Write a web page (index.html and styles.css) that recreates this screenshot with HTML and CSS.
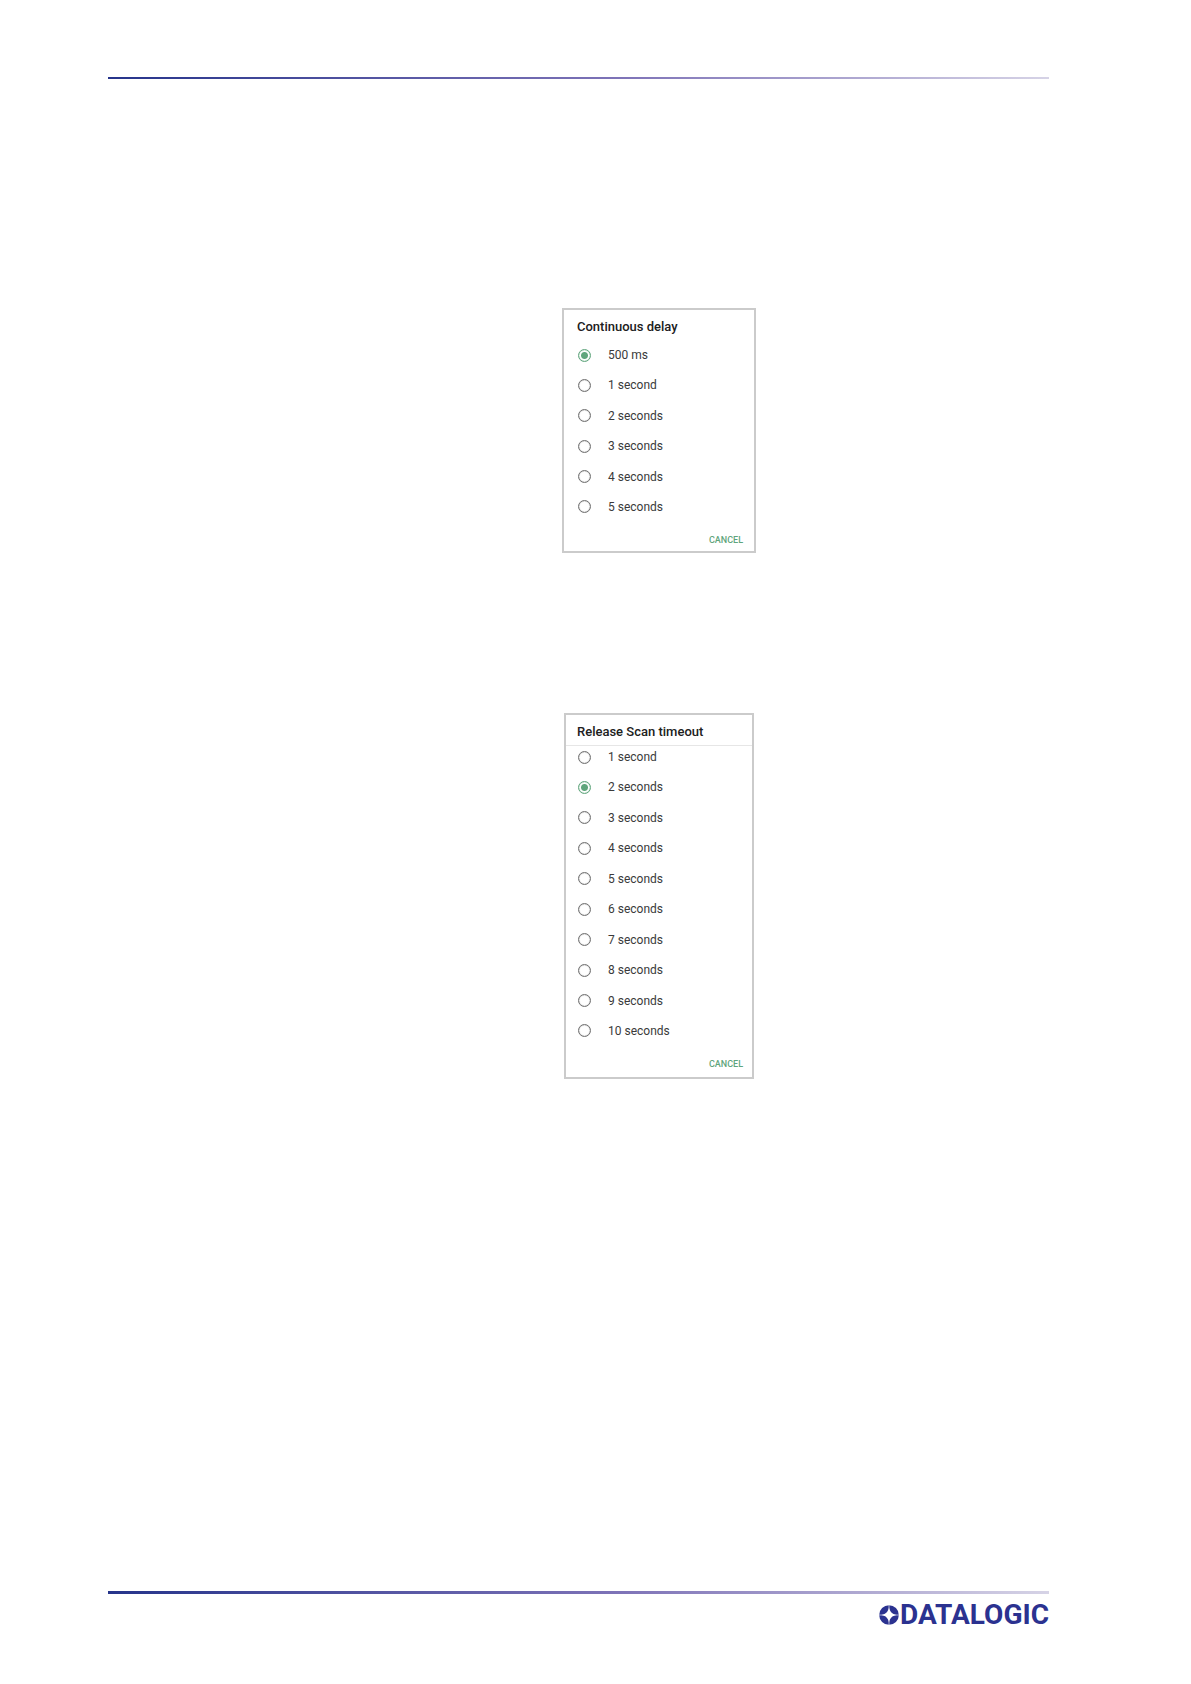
FILE: index.html
```html
<!DOCTYPE html>
<html lang="en">
<head>
<meta charset="utf-8">
<title>Continuous delay and Release Scan timeout</title>
<link rel="stylesheet" href="styles.css">
</head>
<body>
<div class="page">
  <header class="rule rule-top"></header>
  <main class="content">
    <form class="dialog dialog-delay">
      <h2 class="title" id="delay-title">Continuous delay</h2>
      <div class="options" role="radiogroup" aria-labelledby="delay-title">
        <label class="option"><input type="radio" name="delay" checked>500 ms</label>
        <label class="option"><input type="radio" name="delay">1 second</label>
        <label class="option"><input type="radio" name="delay">2 seconds</label>
        <label class="option"><input type="radio" name="delay">3 seconds</label>
        <label class="option"><input type="radio" name="delay">4 seconds</label>
        <label class="option"><input type="radio" name="delay">5 seconds</label>
      </div>
      <button class="cancel" type="button">CANCEL</button>
    </form>
    <form class="dialog dialog-timeout">
      <h2 class="title" id="timeout-title">Release Scan timeout</h2>
      <div class="options" role="radiogroup" aria-labelledby="timeout-title">
        <label class="option"><input type="radio" name="timeout">1 second</label>
        <label class="option"><input type="radio" name="timeout" checked>2 seconds</label>
        <label class="option"><input type="radio" name="timeout">3 seconds</label>
        <label class="option"><input type="radio" name="timeout">4 seconds</label>
        <label class="option"><input type="radio" name="timeout">5 seconds</label>
        <label class="option"><input type="radio" name="timeout">6 seconds</label>
        <label class="option"><input type="radio" name="timeout">7 seconds</label>
        <label class="option"><input type="radio" name="timeout">8 seconds</label>
        <label class="option"><input type="radio" name="timeout">9 seconds</label>
        <label class="option"><input type="radio" name="timeout">10 seconds</label>
      </div>
      <button class="cancel" type="button">CANCEL</button>
    </form>
  </main>
  <footer class="footer">
    <div class="rule rule-bottom"></div>
    <div class="logo">
      <svg class="mark" viewBox="0 0 20 20" aria-hidden="true">
        <circle cx="10" cy="10" r="9.8" fill="#2b3290"/>
        <path d="M10 2.6 C11 7 13 9 17.4 10 C13 11 11 13 10 17.4 C9 13 7 11 2.6 10 C7 9 9 7 10 2.6Z" fill="#fff"/>
        <path d="M10 0V20M0 10H20" stroke="#fff" stroke-width=".6"/>
      </svg>
      <span class="wordmark">DATALOGIC</span>
    </div>
  </footer>
</div>
</body>
</html>
```
FILE: styles.css
```css
* {
  box-sizing: border-box;
}

body {
  margin: 0;
  background: #fff;
  color: #3a3a3a;
  font-family: Roboto, "Liberation Sans", sans-serif;
}

.page {
  display: flex;
  flex-direction: column;
  min-height: 100vh;
  padding: 77px 142px 58px 108px;
}

.rule {
  background: linear-gradient(to right, #26348b, #7f74b8 55%, #d6d3e6);
}

.rule-top {
  height: 2px;
}

.rule-bottom {
  height: 3px;
}

.content {
  display: flex;
  flex: 1;
  flex-direction: column;
  align-items: center;
  gap: 160px;
  padding: 229px 0 0 161px;
}

.dialog {
  display: flex;
  flex-direction: column;
  border: 2px solid #cbcbcb;
}

.dialog-delay {
  width: 194px;
  padding-bottom: 3px;
}

.dialog-timeout {
  width: 190px;
  padding-bottom: 5px;
}

.title {
  margin: 0;
  padding: 8px 13px;
  color: #202020;
  font-size: 13px;
  font-weight: 500;
  line-height: 18px;
}

.dialog-timeout .title {
  padding: 8px 11px 4px;
  border-bottom: 1px solid #e6e6e6;
}

.options {
  display: flex;
  flex-direction: column;
  justify-content: space-between;
  padding: 0 14px;
}

.dialog-delay .options {
  min-height: 171px;
  padding-top: 3px;
}

.dialog-timeout .options {
  min-height: 293px;
  padding: 3px 12px 0;
}

.option {
  display: flex;
  align-items: center;
  gap: 17px;
  font-size: 12px;
  line-height: 16px;
}

.option input {
  appearance: none;
  width: 13px;
  height: 13px;
  margin: 0;
  border: 1px solid #707070;
  border-radius: 50%;
  box-shadow: inset 0 0 1px #707070;
}

.option input:checked {
  border-color: #5fa57c;
  background: radial-gradient(circle, #5fa57c 3px, transparent 4px);
  box-shadow: inset 0 0 1px #5fa57c;
}

.cancel {
  align-self: flex-end;
  margin: 17px 9px 0 0;
  padding: 0 2px;
  border: 0;
  background: none;
  color: #5fa57c;
  font: 500 9px/16px Roboto, "Liberation Sans", sans-serif;
}

.dialog-timeout .cancel {
  margin-right: 7px;
}

.logo {
  display: flex;
  align-items: center;
  justify-content: flex-end;
  gap: 1px;
  padding-top: 10px;
  color: #2b3290;
}

.mark {
  width: 20px;
  height: 20px;
}

.wordmark {
  font-size: 28px;
  font-weight: 700;
  line-height: 22px;
}
```
